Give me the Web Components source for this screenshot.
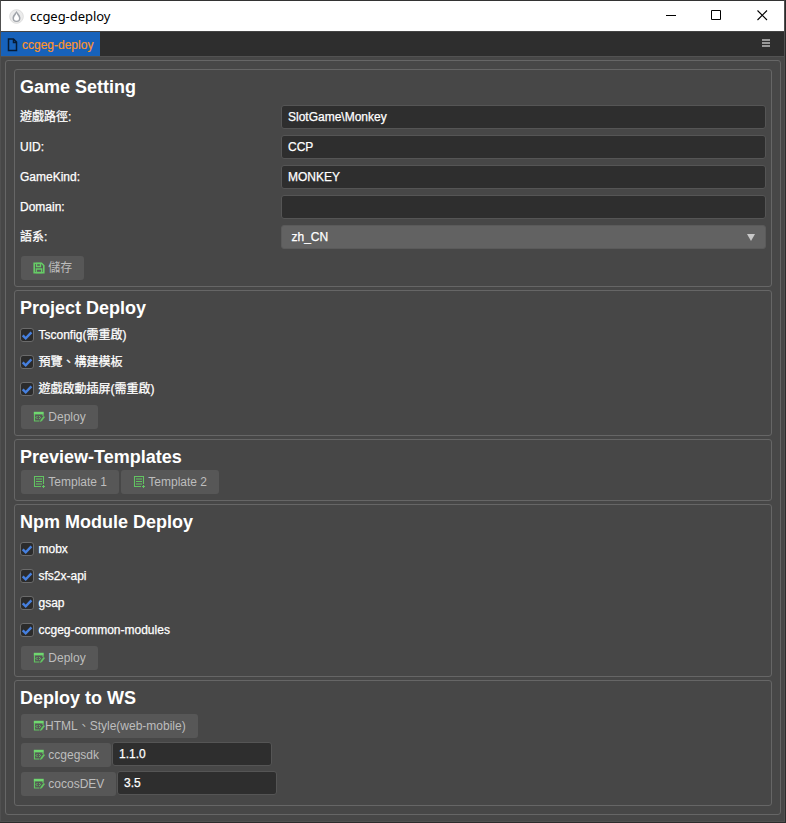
<!DOCTYPE html>
<html lang="zh-Hant"><head><meta charset="utf-8"><title>ccgeg-deploy</title>
<style>
html,body{margin:0;height:100%;overflow:hidden;background:#2b2b2b}
body{font:400 12px/16px "Liberation Sans","Noto Sans CJK TC",sans-serif;color:#fff}
</style></head><body>
<app-window>
<title-bar slot="title">ccgeg-deploy</title-bar>
<tab-bar slot="tabs">ccgeg-deploy</tab-bar>
<ui-section heading="Game Setting" style="height:218px">
<ui-prop label="遊戲路徑:" style="margin-top:1px"><ui-input>SlotGame\Monkey</ui-input></ui-prop>
<ui-prop label="UID:"><ui-input>CCP</ui-input></ui-prop>
<ui-prop label="GameKind:"><ui-input>MONKEY</ui-input></ui-prop>
<ui-prop label="Domain:"><ui-input></ui-input></ui-prop>
<ui-prop label="語系:"><ui-select>zh_CN</ui-select></ui-prop>
<ui-row style="margin-top:4px"><ui-button icon="save" style="width:63px">儲存</ui-button></ui-row>
</ui-section>
<ui-section heading="Project Deploy" style="height:146px">
<ui-check>Tsconfig(需重啟)</ui-check><ui-check>預覽、構建模板</ui-check><ui-check>遊戲啟動插屏(需重啟)</ui-check>
<ui-row style="margin-top:2px"><ui-button icon="deploy" style="width:77px">Deploy</ui-button></ui-row>
</ui-section>
<ui-section heading="Preview-Templates" style="height:62px">
<ui-row style="margin-top:-1px;gap:2px"><ui-button icon="list" style="width:98px">Template 1</ui-button><ui-button icon="list" style="width:98px">Template 2</ui-button></ui-row>
</ui-section>
<ui-section heading="Npm Module Deploy" style="height:173px">
<ui-check>mobx</ui-check><ui-check>sfs2x-api</ui-check><ui-check>gsap</ui-check><ui-check>ccgeg-common-modules</ui-check>
<ui-row style="margin-top:2px"><ui-button icon="deploy" style="width:77px">Deploy</ui-button></ui-row>
</ui-section>
<ui-section heading="Deploy to WS" style="height:126px">
<ui-row style="margin-top:2px"><ui-button icon="deploy" style="width:177px;--gap:0px">HTML、Style(web-mobile)</ui-button></ui-row>
<ui-row style="margin-top:3px"><ui-button icon="deploy" style="width:90px;margin-top:1px">ccgegsdk</ui-button><ui-input style="width:160px">1.1.0</ui-input></ui-row>
<ui-row style="margin-top:4px"><ui-button icon="deploy" style="width:95px;margin-top:1px">cocosDEV</ui-button><ui-input style="width:160px">3.5</ui-input></ui-row>
</ui-section>
</app-window>
<script>
const define = (name, html, setup) => customElements.define(name, class extends HTMLElement {
  constructor() {
    super();
    this.attachShadow({mode: 'open'}).innerHTML = '<style>*{box-sizing:border-box}svg{display:block;flex:none}</style>' + html;
  }
  connectedCallback() { if (setup) setup(this, this.shadowRoot); }
});

define('app-window', `<style>
:host{display:flex;flex-direction:column;box-sizing:border-box;width:785px;height:822px;border:1px solid #505050;border-top-color:#333;border-left-color:#505050;background:#474747}
main{margin:4px 3px 6px 4px;flex:1;border:1px solid #666;border-radius:3px;padding:8px;display:flex;flex-direction:column;gap:3px}
</style><slot name="title"></slot><slot name="tabs"></slot><main><slot></slot></main>`);

define('title-bar', `<style>
:host{display:flex;align-items:center;height:30px;flex:none;background:#fff;color:#000;font:400 13px/18px "Noto Sans",sans-serif;padding:0 16px 0 8px}
.t{flex:1;margin-left:6px;letter-spacing:-.04px;padding-bottom:1px}.c{display:flex;gap:35px;padding-bottom:2px}
</style>
<svg width="15" height="15" viewBox="0 0 15 15"><circle cx="7.5" cy="7.5" r="6.8" fill="#ececec" stroke="#ddd"/><path d="M7.5 1.8C6.5 4.2 3.5 6 3.500 9a4 4 0 0 0 8 0C11.500 6 8.500 4.200 7.500 1.800Z" fill="#a0a4aa"/><path d="M7.500 4C7 6 5 7.500 5 9.300a2.500 2.500 0 0 0 5 0C10 7.500 8 6 7.500 4Z" fill="#fff"/></svg>
<span class="t"><slot></slot></span>
<span class="c"><svg width="11" height="11"><path d="M.5 5.500h10" stroke="#000" shape-rendering="crispEdges"/></svg><svg width="11" height="11"><path d="M.5.5h9v9h-9z" fill="none" stroke="#000"/></svg><svg width="11" height="11"><path d="M.5.5l9.500 9.500M10 .5l-9.500 9.500" stroke="#000" stroke-width="1.100"/></svg></span>`);

define('tab-bar', `<style>
:host{display:flex;height:26px;flex:none;justify-content:space-between;background:#2e2e2e;border-top:1px solid #444;border-bottom:1px solid #525252;box-sizing:border-box;margin-bottom:-1px}
.tab{display:flex;align-items:center;gap:4px;width:99px;height:24px;background:#1762bb;color:#fd942b;padding:1px 0 0 6px;-webkit-text-stroke:.2px #fd942b}
.menu{margin:7px 14px 0 0}
</style><div class="tab"><svg width="11" height="14" viewBox="0 0 11 14"><path d="M1.500 1h5l3 3v8.500h-8zM6.500 1v3.500H10" fill="none" stroke="#071c35" stroke-width="1.500"/></svg><slot></slot></div>
<svg class="menu" width="8" height="8"><path d="M0 0h8v2H0zM0 3h8v2H0zM0 6h8v2H0z" fill="#999"/></svg>`);

define('ui-section', `<style>
:host{display:flex;flex-direction:column;flex:none;box-sizing:border-box;border:1px solid #666;border-radius:3px;padding:6px 5px 0}
h3{margin:0 0 1px;height:24px;font:bold 18px/22px "Liberation Sans",sans-serif}
</style><h3></h3><slot></slot>`, (el, r) => r.querySelector('h3').textContent = el.getAttribute('heading'));

define('ui-prop', `<style>:host{display:grid;grid-template-columns:261px 485px;height:30px;align-items:center;-webkit-text-stroke:.25px #fff}label{padding-bottom:1px}</style><label></label><slot></slot>`,
 (el, r) => r.querySelector('label').textContent = el.getAttribute('label'));

define('ui-input', `<style>:host{display:block;box-sizing:border-box;height:24px;border:1px solid #555;border-radius:3px;background:#2e2e2e;padding:3px 6px;line-height:16px;-webkit-text-stroke:.25px #fff}</style><slot></slot>`);

define('ui-select', `<style>:host{display:flex;justify-content:space-between;align-items:center;box-sizing:border-box;height:24px;border:1px solid #5a5a5a;border-radius:3px;background:#626262;padding:0 10px 0 9.500px}span{padding-bottom:1px}</style><span><slot></slot></span><svg width="8" height="7"><path d="M0 0h8L4 7z" fill="#c8c8c8"/></svg>`);

define('ui-row', `<style>:host{display:flex;padding-left:1px;gap:1px;height:25px}</style><slot></slot>`);

define('ui-check', `<style>:host{display:flex;align-items:center;height:27px;gap:4.500px;box-sizing:border-box;-webkit-text-stroke:.25px #fff}span{padding-bottom:1px}svg{margin-bottom:1px}</style>
<svg width="14" height="14"><rect x=".5" y=".5" width="13" height="13" rx="2.500" fill="#2b2b2b" stroke="#6b6b6b"/><path d="M2.700 7.300l3 3L11.400 4.400" fill="none" stroke="#4680e0" stroke-width="2.400"/></svg><span><slot></slot></span>`);

const icons = {
 save: '<path d="M1.200 1.200h7.300l2.300 2.300v7.300H1.200z" fill="none" stroke="#66cc66" stroke-width="1.600"/><path d="M3.500 1.500h4v3h-4zM3.300 7h5.400v3.500H3.300z" fill="none" stroke="#66cc66" stroke-width="1.300"/>',
 list: '<path d="M10.500 8V.5H1.500v10H8" fill="none" stroke="#62c462" stroke-width="1.100"/><path d="M3 3h6M3 5.500h6M3 8h6M10.500 9v3M9 10.500h3" stroke="#62c462"/>',
 deploy: '<path d="M.8.800h9.900v2.600H.8z" fill="#70d870"/><path d="M1.500 3v7h5M10 3v2" fill="none" stroke="#62c462" stroke-width="1.200"/><path d="M4.500 5L3 6.500 4.500 8M6.200 5L7.500 6.500 6.200 8" fill="none" stroke="#62c462"/><path d="M7 11l.5-2 3-4 1.500 1-3 4z" fill="#62c462"/>'
};
define('ui-button', `<style>:host{display:flex;box-sizing:border-box;align-items:center;flex:none;height:24px;border-radius:3px;background:#575757;color:#bdbdbd;padding-left:12px;gap:var(--gap,3.300px);white-space:nowrap}</style><svg width="12" height="12"></svg><span><slot></slot></span>`,
 (el, r) => r.querySelector('svg').innerHTML = icons[el.getAttribute('icon')]);
</script></body></html>
